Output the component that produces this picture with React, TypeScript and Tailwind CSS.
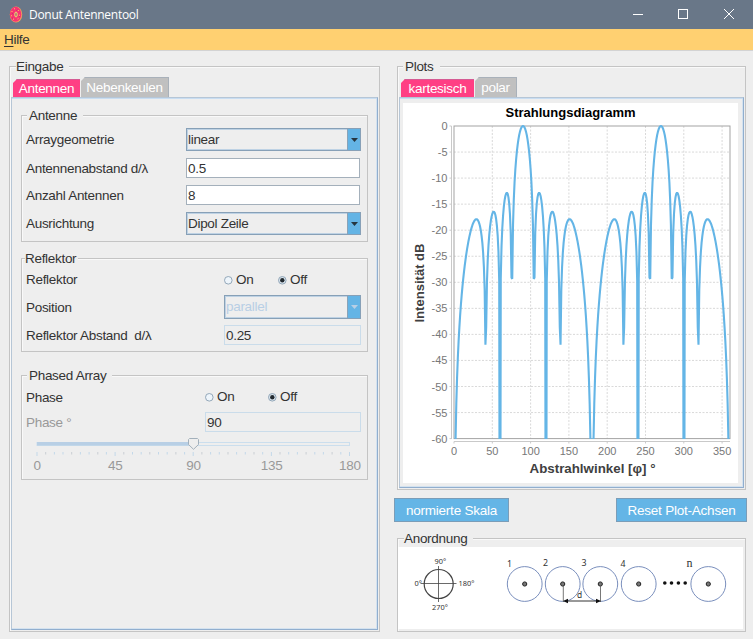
import React from "react";

const DEGREES = Array.from({ length: 361 }, (_, i) => i);

// Normalised array factor of eight elements at half wavelength spacing, in dB.
function level(deg: number) {
  const c = Math.cos((deg * Math.PI) / 180);
  const den = 8 * Math.sin((Math.PI / 2) * c);
  if (Math.abs(den) < 1e-9) return 0;
  const v = Math.abs(Math.sin(4 * Math.PI * c) / den);
  return Math.max(-120, 20 * Math.log10(v + 1e-9));
}

const curve = DEGREES.map(
  (d) => `${(51 + d * 0.7665).toFixed(2)},${(23 - level(d) * 5.21).toFixed(2)}`,
).join(" ");

function Group({
  title,
  className,
  titleClass = "left-[5px] px-[2px]",
  children,
}: {
  title: string;
  className: string;
  titleClass?: string;
  children: React.ReactNode;
}) {
  return (
    <section className={`relative border border-[#c4c4c4] shadow-[inset_1px_1px_0_#f9f9f9] ${className}`}>
      <h2 className={`absolute top-[-8px] h-4 bg-[#eeeeee] leading-[15px] whitespace-nowrap ${titleClass}`}>{title}</h2>
      {children}
    </section>
  );
}

function Combo({ value, className, disabled = false }: { value: string; className: string; disabled?: boolean }) {
  return (
    <div
      className={`flex border border-[#87a0b7] shadow-[inset_0_0_0_1px_#bed2e4] ${className} ${disabled ? "h-6 text-[#b8cfe5]" : "h-[23px]"}`}
    >
      <span className="flex-1 pl-px leading-[22px]">{value}</span>
      <span className="flex w-[13px] items-center justify-center border-l border-[#8aa3b8] bg-[#64b4e5]">
        <svg width="7" height="4" viewBox="0 0 7 4">
          <path d="M0 0h7L3.5 4z" fill={disabled ? "#b8cfe5" : "#263640"} />
        </svg>
      </span>
    </div>
  );
}

function Radio({ label, on = false, className }: { label: string; on?: boolean; className: string }) {
  return (
    <label className={`flex items-center gap-[3px] ${className}`}>
      <svg width="9" height="9" viewBox="0 0 9 9">
        <circle cx="4.3" cy="4.3" r="3.8" fill={on ? "#dce6ee" : "#eef5fb"} stroke="#899fb2" strokeWidth="0.9" />
        {on && <circle cx="4.3" cy="4.3" r="2.2" fill="#222a30" />}
      </svg>
      <span className="pt-px">{label}</span>
    </label>
  );
}

function Tab({ label, active = false, className }: { label: string; active?: boolean; className: string }) {
  return (
    <div
      className={`text-center text-white [clip-path:polygon(4px_0,100%_0,100%_100%,0_100%,0_4px)] ${
        active
          ? "h-[18px] border-t border-[#d55b93] bg-[#ff3f84] leading-[17px]"
          : "h-[20px] border-t border-r border-[#a9b1ba] bg-[#c0c0c0] leading-[20px] text-[#f4f4f4]"
      } ${className}`}
    >
      {label}
    </div>
  );
}

function Slider() {
  return (
    <div className="ml-[4px] w-[336px] text-[#999999]">
      <svg className="block" width="336" height="20" viewBox="26 437 336 20">
        <rect x="37" y="442.5" width="312.5" height="3" fill="#eeeeee" stroke="#cbdeed" />
        <rect x="37" y="442" width="156" height="3.5" fill="#b8cfe5" />
        {Array.from({ length: 37 }, (_, i) => (
          <path
            key={i}
            d={`M${(37 + i * 8.68).toFixed(1)} 452v${i % 9 === 0 ? 4 : 2.5}`}
            stroke={i % 3 === 1 ? "#c9ced3" : "#c3d8e9"}
          />
        ))}
        <path d="M188.5 439.5l1-1h8l1 1v5l-5 4.8-5-4.8z" fill="#eeeeee" stroke="#a3b0bb" />
      </svg>
      <div className="ml-[-28px] flex h-[18px] w-[392px] leading-[18px]">
        {["0", "45", "90", "135", "180"].map((n) => (
          <span key={n} className="w-[78.2px] text-center">
            {n}
          </span>
        ))}
      </div>
    </div>
  );
}

function Chart() {
  return (
    <svg
      className="block bg-white font-['Liberation_Sans',sans-serif] tracking-normal"
      width="335"
      height="380"
      viewBox="0 0 335 380"
    >
      <clipPath id="area">
        <rect x="51" y="22" width="276.5" height="314" />
      </clipPath>
      <text x="102.5" y="13.5" fontSize="13" fontWeight="bold" fill="#000" textLength="130" lengthAdjust="spacingAndGlyphs">
        Strahlungsdiagramm
      </text>
      <g stroke="#d5d5d5" strokeDasharray="2 1.5" strokeWidth="0.9">
        {Array.from({ length: 11 }, (_, i) => (
          <path key={i} d={`M51 ${23 + (i + 1) * 26.05}H327`} />
        ))}
        {Array.from({ length: 7 }, (_, i) => (
          <path key={i} d={`M${51 + (i + 1) * 38.3} 23V336`} />
        ))}
      </g>
      <rect x="51" y="23" width="276" height="312.6" fill="none" stroke="#a3a3a3" />
      <path d="M48.5 23V336M51 338.5H327" stroke="#c9c9c9" fill="none" />
      <g fontSize="11" fill="#777">
        {Array.from({ length: 13 }, (_, i) => (
          <g key={i}>
            <path d={`M46.5 ${23 + i * 26.05}h2`} stroke="#c9c9c9" />
            <text x="44.5" y={27 + i * 26.05} textAnchor="end">
              {i === 0 ? "0" : `-${i * 5}`}
            </text>
          </g>
        ))}
        {Array.from({ length: 8 }, (_, i) => (
          <g key={i}>
            <path d={`M${51 + i * 38.3} 338.5v2`} stroke="#c9c9c9" />
            <text x={51 + i * 38.3} y="352" textAnchor="middle">
              {i * 50}
            </text>
          </g>
        ))}
      </g>
      <polyline points={curve} clipPath="url(#area)" fill="none" stroke="#64b5e6" strokeWidth="2.1" strokeLinejoin="bevel" />
      <g fontSize="13" fontWeight="bold" fill="#404040">
        <text x="126.5" y="370" textLength="126" lengthAdjust="spacingAndGlyphs">
          Abstrahlwinkel [φ] °
        </text>
        <text transform="translate(21 219.5) rotate(-90)" textLength="79" lengthAdjust="spacingAndGlyphs">
          Intensität dB
        </text>
      </g>
    </svg>
  );
}

function Arrangement() {
  return (
    <svg
      className="block bg-white font-['Noto_Sans',sans-serif] tracking-normal"
      width="345"
      height="82"
      viewBox="398 547 345 82"
    >
      <g fill="none" stroke="#444" strokeWidth="0.8">
        <circle cx="438.7" cy="584" r="14.5" strokeWidth="1.2" />
        <path d="M420.5 583.5H456.5M438.5 566V602" />
      </g>
      <g fontSize="7.4" fill="#333">
        <text x="434.5" y="564">90°</text>
        <text x="414.5" y="585.5">0°</text>
        <text x="458.5" y="586">180°</text>
        <text x="432" y="609.5">270°</text>
      </g>
      {[524.7, 562.7, 600.3, 638.7, 708.3].map((x) => (
        <g key={x}>
          <circle cx={x} cy="584" r="17.4" fill="none" stroke="#7288b8" strokeWidth="0.95" />
          <circle cx={x} cy="584" r="2.1" fill="#777" stroke="#222" strokeWidth="1" />
        </g>
      ))}
      <path d="M563.3 586V602M600.5 586V602" stroke="#555" strokeWidth="0.8" />
      <path d="M566 601H598" stroke="#333" />
      <path d="M563 601l5-2.2v4.4zM601 601l-5-2.2v4.4z" fill="#111" />
      <g fill="#111">
        {[664.8, 671.5, 678.4, 685.2].map((x) => (
          <circle key={x} cx={x} cy="583" r="1.8" />
        ))}
      </g>
      <g fontSize="8.8" fill="#333">
        <text x="507" y="567">1</text>
        <text x="543" y="566">2</text>
        <text x="581.5" y="566">3</text>
        <text x="620.5" y="567">4</text>
        <text x="686.5" y="567" fontFamily="Liberation Serif" fontSize="12">n</text>
        <text x="577" y="598" fontSize="8.4">d</text>
      </g>
    </svg>
  );
}

function DonutIcon() {
  return (
    <svg className="ml-[9px]" width="14" height="17" viewBox="0 0 14 17">
      <ellipse cx="7" cy="8.5" rx="6.2" ry="8" fill="#f0a05c" />
      <ellipse cx="6.6" cy="8.3" rx="5.7" ry="7.5" fill="#f83373" />
      <ellipse cx="7" cy="8.5" rx="1.3" ry="2.5" fill="#a87a70" stroke="#f5cc72" />
      <path d="M2.5 5l1 1M5 2.5l1 .5M9 4l.7 1M2 10l1-.5M4 13.5l1-.7M8.5 13l1-.7M10 9l1 .4" stroke="#ffd45e" strokeWidth="0.9" />
      <path d="M3.5 7.5l.5.7M7.5 4.5l.8-.5M3 12l.7.2M10 11l.5-.6" stroke="#8f375d" strokeWidth="0.8" />
    </svg>
  );
}

const caption = "pt-[2px]";
const field = "h-5 border border-[#a4b0bb] bg-white pl-px leading-[19px]";
const fieldOff = "h-5 border border-[#cadcea] pl-px leading-[19px]";
const pane =
  "border border-[#b6c6d6] border-r-[#91aece] border-b-[#91aece] shadow-[inset_0_1px_0_#c8ddf2,inset_-1px_-1px_0_#d4e2ef]";
const button =
  "h-6 border border-[#7b9db8] bg-[#64b5e6] text-center leading-[23px] text-white";

export default function App() {
  return (
    <div className="h-[639px] w-[753px] overflow-hidden bg-[#eeeeee] font-['Liberation_Sans',Arial,sans-serif] text-[13.5px] tracking-[-0.3px] text-[#333333]">
      <header className="flex h-[29px] items-center bg-[#697788] text-white">
        <DonutIcon />
        <span className="ml-[6px] flex-1 font-['Open_Sans',sans-serif] text-[12px] leading-[28px] tracking-[-0.28px]">
          Donut Antennentool
        </span>
        <svg width="130" height="29" viewBox="623 0 130 29" fill="none" stroke="white">
          <path d="M633 14.5h10M724 9l10 10M734 9l-10 10" />
          <rect x="678.5" y="9.5" width="9" height="9" />
        </svg>
      </header>
      <nav className="h-[22px] border-b border-[#d3d3d3] bg-[#ffd071] pl-1 leading-[22px]">
        <span className="underline underline-offset-2">H</span>ilfe
      </nav>

      <main className="flex pt-[15px] pl-[9px]">
        <Group title="Eingabe" className="h-[566px] w-[371px]" titleClass="left-[6px] pr-[6px]">
          <div className="mt-[10px] ml-[3px] flex h-[20px] items-end gap-px">
            <Tab label="Antennen" active className="w-[67px]" />
            <Tab label="Nebenkeulen" className="w-[88px]" />
          </div>
          <div className={`ml-px h-[533px] w-[367px] px-[9px] pt-[17px] ${pane}`}>
            <Group title="Antenne" className="h-[127px] w-[347px]" titleClass="left-[5px] pr-[6px] pl-[2px]">
              <div className="grid grid-cols-[160px_175px] grid-rows-[23px_20px_20px_23px] items-center gap-y-[7px] pt-[12px] pl-[4px]">
                <span className={caption}>Arraygeometrie</span>
                <Combo value="linear" className="w-[175px]" />
                <span className={caption}>Antennenabstand d/λ</span>
                <div className={`w-[174px] ${field}`}>0.5</div>
                <span className={caption}>Anzahl Antennen</span>
                <div className={`w-[174px] ${field}`}>8</div>
                <span className={caption}>Ausrichtung</span>
                <Combo value="Dipol Zeile" className="w-[175px]" />
              </div>
            </Group>
            <Group title="Reflektor" className="mt-[16px] h-[94px] w-[347px]" titleClass="left-[3px] pr-[2px]">
              <div className="grid grid-cols-[198px_137px] grid-rows-[20px_24px_20px] items-center gap-y-[6px] pt-[10px] pl-[4px]">
                <span className="pt-[3px]">Reflektor</span>
                <div className="flex pt-[2px]">
                  <Radio label="On" className="w-[54px]" />
                  <Radio label="Off" on className="" />
                </div>
                <span className={caption}>Position</span>
                <Combo value="parallel" disabled className="w-[137px]" />
                <span className="whitespace-pre pt-[3px]">Reflektor Abstand  d/λ</span>
                <div className={fieldOff}>0.25</div>
              </div>
            </Group>
            <Group title="Phased Array" className="mt-[23px] h-[105px] w-[347px]" titleClass="left-[5px] pr-[6px] pl-[2px]">
              <div className="grid grid-cols-[179px_156px] grid-rows-[20px_20px] items-center gap-y-[5px] pt-[11px] pl-[4px]">
                <span className={caption}>Phase</span>
                <div className="flex">
                  <Radio label="On" className="w-[63px]" />
                  <Radio label="Off" on className="" />
                </div>
                <span className={`text-[#999999] ${caption}`}>Phase °</span>
                <div className={fieldOff}>90</div>
              </div>
              <div className="pt-[5px]">
                <Slider />
              </div>
            </Group>
          </div>
        </Group>

        <div className="ml-[14px] w-[353px]">
          <Group title="Plots" className="ml-[3px] h-[424px] w-[349px]" titleClass="left-[5px] pr-[6px] pl-[2px]">
            <div className="mt-[10px] ml-[3px] flex h-[20px] items-end gap-px">
              <Tab label="kartesisch" active className="w-[73px]" />
              <Tab label="polar" className="w-[42px]" />
            </div>
            <div className={`ml-px h-[391px] w-[345px] pt-[5px] pl-[3px] ${pane}`}>
              <Chart />
            </div>
          </Group>
          <div className="mt-[8px] flex justify-between">
            <div className={`w-[115px] tracking-[-0.22px] ${button}`}>normierte Skala</div>
            <div className={`w-[131px] tracking-[-0.22px] ${button}`}>Reset Plot-Achsen</div>
          </div>
          <Group title="Anordnung" className="mt-[16px] ml-[3px] h-[94px] w-[349px] pt-[8px]" titleClass="left-[6px] pr-[6px]">
            <Arrangement />
          </Group>
        </div>
      </main>
    </div>
  );
}
